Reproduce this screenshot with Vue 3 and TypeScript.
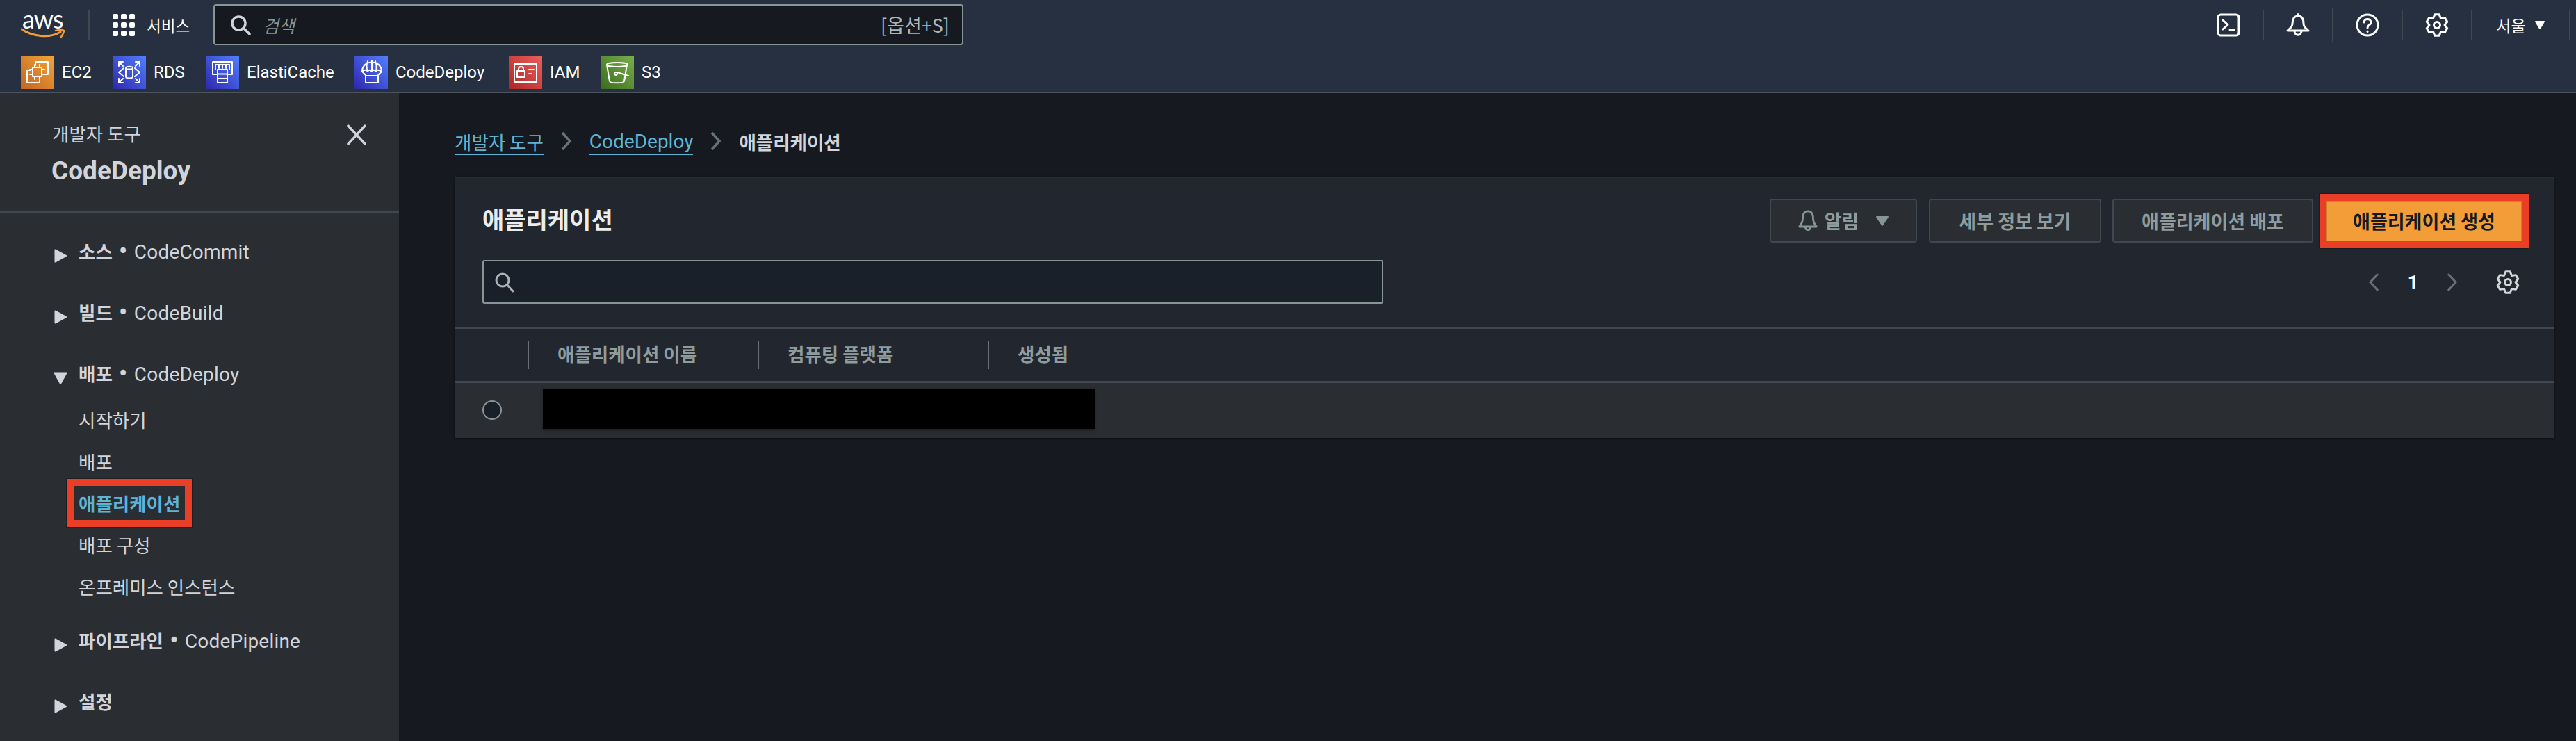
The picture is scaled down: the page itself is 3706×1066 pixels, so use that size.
<script setup lang="ts">
function gear(cx: number, cy: number, ro: number, ri: number, n: number): string {
  const pts: string[] = []
  const step = (Math.PI * 2) / n
  for (let i = 0; i < n; i++) {
    const a = -Math.PI / 2 + i * step
    const seq: [number, number][] = [
      [ri, a - step * 0.5],
      [ro, a - step * 0.2],
      [ro, a + step * 0.2],
    ]
    for (const [r, t] of seq) {
      pts.push(`${(cx + r * Math.cos(t)).toFixed(2)} ${(cy + r * Math.sin(t)).toFixed(2)}`)
    }
  }
  return 'M' + pts.join('L') + 'Z'
}
const gearPath = gear(17, 17, 15.5, 11, 6)

const shortcuts = [
  { name: 'EC2', tone: 'orange', w: 132, d: 'M21 14V9H39V27H33M27 33V39H9V21H14M17 17H30V30H17ZM20 13V17M27 13V17M20 30V34M27 30V34M13 20H17M13 27H17M30 20H34M30 27H34' },
  { name: 'RDS', tone: 'blue', w: 134, d: 'M19 17.5C19 15 29 15 29 17.5V30.500C29 33 19 33 19 30.500ZM19 18C19 20 29 20 29 18M16 18L9 24L16 30M32 18L39 24L32 30M9 15V9H15M9 9L15 15M33 9H39V15M39 9L33 15M9 33V39H15M9 39L15 33M39 33V39H33M39 39L33 33' },
  { name: 'ElastiCache', tone: 'blue', w: 214, d: 'M16 27H10V9H38V27H32M14 20V13H34V20M19 13V18M24 13V18M29 13V18M17 20H31V39H17ZM17 26.500H31M17 33H31' },
  { name: 'CodeDeploy', tone: 'blue', w: 222, d: 'M11 23C11 5 39 5 39 23C35 20 31 20 31 23C29 20 26 20 25 23C23 20 20 20 19 23C18 20 14 20 11 23ZM25 7V23M19 8C17 13 17 18 19 23M30 8C32 13 32 18 31 23M11 23L17 29M39 23L33 29M16 29H34V39H16Z' },
  { name: 'IAM', tone: 'red', w: 132, d: 'M8 12H40V38H8ZM12 22H23V31H12ZM14 22V19C14 15 21 15 21 19V22M29 20H36M29 26H33' },
  { name: 'S3', tone: 'green', w: 100, d: 'M9 13C9 9 39 9 39 13C39 17 9 17 9 13ZM9 13L13 37C14 40 33 40 34 37L38 13M24 24L40 29M22 24A2 2 0 1 0 22.100 24Z' },
]

const subItems = ['시작하기', '배포', '애플리케이션', '배포 구성', '온프레미스 인스턴스']
</script>

<template>
  <div class="page">
    <header class="topbar">
      <div class="toprow">
        <div class="logo">
          <span class="logo-text">aws</span>
          <svg class="swoosh" viewBox="0 0 64 16" width="64" height="16">
            <path d="M1 2C16 12 40 16 57 6" fill="none" stroke="#f29d38" stroke-width="3" stroke-linecap="round" />
            <path d="M50 4C54 3 59 2 62 4C62 7 60 10 58 13" fill="none" stroke="#f29d38" stroke-width="2.500" stroke-linecap="round" />
          </svg>
        </div>
        <div class="services">
          <span class="grid-ico"><i v-for="n in 9" :key="n"></i></span>
          <span class="services-label">서비스</span>
        </div>
        <div class="global-search">
          <svg viewBox="0 0 30 30" width="30" height="30" fill="none" stroke="#d1d5db" stroke-width="3.500">
            <circle cx="12.500" cy="12.500" r="9.500" />
            <path d="M19.500 19.500L28 28" stroke-linecap="round" />
          </svg>
          <span class="gs-placeholder">검색</span>
          <span class="gs-hint">[옵션+S]</span>
        </div>
        <div class="top-actions">
          <div class="act">
            <svg viewBox="0 0 34 34" width="34" height="34" fill="none" stroke="#fff" stroke-width="3" stroke-linecap="round" stroke-linejoin="round">
              <rect x="2" y="2" width="30" height="30" rx="4" />
              <path d="M9 10L16 16.500L9 23M19 24H25" />
            </svg>
          </div>
          <div class="act act-tall">
            <svg viewBox="0 0 34 34" width="34" height="34" fill="none" stroke="#fff" stroke-width="3" stroke-linecap="round" stroke-linejoin="round">
              <path d="M17 1.500V4M17 4C10 4 9 10 9 15C9 20 5 22 2 25H32C29 22 25 20 25 15C25 10 24 4 17 4ZM12 25.500C12 33 22 33 22 25.500" />
            </svg>
          </div>
          <div class="act">
            <svg viewBox="0 0 34 34" width="34" height="34" fill="none" stroke="#fff" stroke-width="3" stroke-linecap="round" stroke-linejoin="round">
              <circle cx="17" cy="17" r="15" />
              <path d="M12 13C12 7 22 7 22 13C22 17 17 16.500 17 21" />
              <path d="M17 26V26.500" />
            </svg>
          </div>
          <div class="act">
            <svg viewBox="0 0 34 34" width="34" height="34" fill="none" stroke="#fff" stroke-width="3" stroke-linejoin="round">
              <path :d="gearPath" />
              <circle cx="17" cy="17" r="4.500" />
            </svg>
          </div>
          <div class="act region">
            <span>서울</span>
            <svg viewBox="0 0 16 14" width="16" height="14"><path d="M2 2H14L8 12Z" fill="#fff" stroke="#fff" stroke-width="2" stroke-linejoin="round" /></svg>
          </div>
        </div>
      </div>
      <div class="shortcuts">
        <div v-for="s in shortcuts" :key="s.name" class="shortcut" :style="{ width: s.w + 'px' }">
          <span class="sc-ico" :class="s.tone">
            <svg viewBox="0 0 48 48" width="48" height="48" fill="none" stroke="#fff" stroke-width="2" stroke-linejoin="round" stroke-linecap="round">
              <path :d="s.d" />
            </svg>
          </span>
          <span>{{ s.name }}</span>
        </div>
      </div>
    </header>

    <div class="body">
      <aside class="sidebar">
        <div class="side-head">
          <div>
            <div class="side-sup ko">개발자 도구</div>
            <div class="side-title">CodeDeploy</div>
          </div>
          <svg class="side-close" viewBox="0 0 28 30" width="28" height="30" fill="none" stroke="#d1d5db" stroke-width="3.500" stroke-linecap="round">
            <path d="M2 2L26 28M26 2L2 28" />
          </svg>
        </div>
        <nav class="side-nav">
          <div class="section">
            <svg class="tri" viewBox="0 0 18 20" width="18" height="20"><path d="M1.500 1.500L17 10L1.500 18.500Z" fill="#d1d5db" stroke="#d1d5db" stroke-width="2" stroke-linejoin="round" /></svg>
            <span><b class="ko">소스</b><i class="dot">•</i>CodeCommit</span>
          </div>
          <div class="section">
            <svg class="tri" viewBox="0 0 18 20" width="18" height="20"><path d="M1.500 1.500L17 10L1.500 18.500Z" fill="#d1d5db" stroke="#d1d5db" stroke-width="2" stroke-linejoin="round" /></svg>
            <span><b class="ko">빌드</b><i class="dot">•</i>CodeBuild</span>
          </div>
          <div class="section open">
            <svg class="tri" viewBox="0 0 20 18" width="20" height="18"><path d="M1.500 1.500H18.500L10 17Z" fill="#d1d5db" stroke="#d1d5db" stroke-width="2" stroke-linejoin="round" /></svg>
            <span><b class="ko">배포</b><i class="dot">•</i>CodeDeploy</span>
          </div>
          <ul class="subs">
            <li v-for="item in subItems" :key="item">
              <span class="ko sub-label" :class="{ active: item === '애플리케이션' }">{{ item }}</span>
            </li>
          </ul>
          <div class="section">
            <svg class="tri" viewBox="0 0 18 20" width="18" height="20"><path d="M1.500 1.500L17 10L1.500 18.500Z" fill="#d1d5db" stroke="#d1d5db" stroke-width="2" stroke-linejoin="round" /></svg>
            <span><b class="ko">파이프라인</b><i class="dot">•</i>CodePipeline</span>
          </div>
          <div class="section">
            <svg class="tri" viewBox="0 0 18 20" width="18" height="20"><path d="M1.500 1.500L17 10L1.500 18.500Z" fill="#d1d5db" stroke="#d1d5db" stroke-width="2" stroke-linejoin="round" /></svg>
            <span><b class="ko">설정</b></span>
          </div>
        </nav>
      </aside>

      <main class="main">
        <div class="crumbs">
          <a class="crumb ko">개발자 도구</a>
          <svg viewBox="0 0 16 28" width="16" height="28" fill="none" stroke="#687078" stroke-width="3.500"><path d="M2 2L13 14L2 26" /></svg>
          <a class="crumb">CodeDeploy</a>
          <svg viewBox="0 0 16 28" width="16" height="28" fill="none" stroke="#687078" stroke-width="3.500"><path d="M2 2L13 14L2 26" /></svg>
          <span class="crumb-cur ko">애플리케이션</span>
        </div>

        <section class="panel">
          <div class="panel-head">
            <div class="head-row">
              <h1 class="title ko">애플리케이션</h1>
              <div class="btns">
                <button class="btn w-alert">
                  <svg viewBox="0 0 30 34" width="30" height="32" fill="none" stroke="#879596" stroke-width="3" stroke-linejoin="round" stroke-linecap="round">
                    <path d="M15 2C8 2 7 8 7 14C7 20 4 22 2 25.500H28C26 22 23 20 23 14C23 8 22 2 15 2ZM11 26C11 32 19 32 19 26" />
                  </svg>
                  <span>알림</span>
                  <svg class="btn-caret" viewBox="0 0 20 16" width="20" height="16"><path d="M2 2H18L10 14Z" fill="#879596" stroke="#879596" stroke-width="2" stroke-linejoin="round" /></svg>
                </button>
                <button class="btn w-detail">세부 정보 보기</button>
                <button class="btn w-deploy">애플리케이션 배포</button>
                <button class="btn-primary">애플리케이션 생성</button>
              </div>
            </div>
            <div class="tool-row">
              <div class="search">
                <svg viewBox="0 0 30 30" width="30" height="30" fill="none" stroke="#a9b3b5" stroke-width="3">
                  <circle cx="12" cy="12" r="9" />
                  <path d="M18.500 18.500L27 28" stroke-linecap="round" />
                </svg>
              </div>
              <div class="pager">
                <svg viewBox="0 0 16 28" width="16" height="28" fill="none" stroke="#687078" stroke-width="3"><path d="M14 2L3 14L14 26" /></svg>
                <span class="page-num">1</span>
                <svg viewBox="0 0 16 28" width="16" height="28" fill="none" stroke="#687078" stroke-width="3"><path d="M2 2L13 14L2 26" /></svg>
                <span class="pager-div"></span>
                <svg class="pager-gear" viewBox="0 0 34 34" width="34" height="34" fill="none" stroke="#d1d5db" stroke-width="3" stroke-linejoin="round">
                  <path :d="gearPath" />
                  <circle cx="17" cy="17" r="4.500" />
                </svg>
              </div>
            </div>
          </div>
          <div class="thead">
            <div class="th-sel"></div>
            <div class="th ko">애플리케이션 이름</div>
            <div class="th ko">컴퓨팅 플랫폼</div>
            <div class="th ko">생성됨</div>
          </div>
          <div class="trow">
            <span class="radio"></span>
            <div class="redacted"></div>
          </div>
        </section>
      </main>
    </div>
  </div>
</template>

<style scoped>
.page {
  display: flex;
  flex-direction: column;
  height: 1066px;
  overflow: hidden;
  background: #16191f;
  color: #d1d5db;
  font-family: Roboto, "Noto Sans CJK KR", sans-serif;
  font-size: 28px;
}
.ko {
  font-family: "Noto Sans CJK KR", sans-serif;
  font-size: 26.5px;
}
.topbar {
  flex: none;
  height: 134px;
  box-sizing: border-box;
  background: #263040;
  border-bottom: 2px solid #4d535b;
  color: #fff;
}
.toprow {
  display: flex;
  align-items: center;
  height: 71px;
}
.logo {
  width: 97px;
  height: 44px;
  margin-left: 30px;
  display: flex;
  flex-direction: column;
  border-right: 2px solid #414750;
}
.logo-text {
  font-family: Lato, sans-serif;
  font-size: 36px;
  line-height: 26px;
  height: 26px;
  margin-left: 2px;
  letter-spacing: -1px;
}
.swoosh {
  display: block;
}
.services {
  display: flex;
  align-items: center;
  width: 145px;
  margin-left: 33px;
  gap: 17px;
}
.grid-ico {
  display: grid;
  grid-template-columns: repeat(3, 8px);
  grid-auto-rows: 8px;
  gap: 4px;
}
.grid-ico i {
  background: #fff;
  border-radius: 2px;
}
.services-label {
  font-family: "Noto Sans CJK KR", sans-serif;
  font-size: 22.5px;
}
.global-search {
  display: flex;
  align-items: center;
  box-sizing: border-box;
  width: 1079px;
  height: 59px;
  padding: 0 18px 0 22px;
  background: #16191f;
  border: 2px solid #879596;
  border-radius: 4px;
}
.gs-placeholder {
  margin-left: 17px;
  font-family: "Noto Sans CJK KR", sans-serif;
  font-size: 25px;
  font-style: italic;
  color: #879596;
}
.gs-hint {
  margin-left: auto;
  font-family: "Noto Sans CJK KR", sans-serif;
  font-size: 27px;
  color: #aab7b8;
}
.top-actions {
  display: flex;
  align-items: center;
  margin-left: auto;
  margin-right: 8px;
}
.act {
  display: flex;
  align-items: center;
  justify-content: center;
  box-sizing: border-box;
  width: 100px;
  height: 44px;
  border-right: 2px solid #414750;
}
.act-tall {
  height: 48px;
}
.region {
  width: 141px;
  gap: 12px;
  font-family: "Noto Sans CJK KR", sans-serif;
  font-size: 23px;
}
.shortcuts {
  display: flex;
  padding: 9px 0 0 30px;
  font-size: 24px;
}
.shortcut {
  display: flex;
  align-items: center;
  gap: 11px;
}
.sc-ico {
  display: block;
  width: 48px;
  height: 48px;
}
.sc-ico svg {
  display: block;
}
.orange {
  background: linear-gradient(45deg, #c8631f, #f0a53a);
}
.blue {
  background: linear-gradient(45deg, #2e27ad, #527fff);
}
.red {
  background: linear-gradient(45deg, #ad2625, #ec5f5a);
}
.green {
  background: linear-gradient(45deg, #3b6c1e, #7aae4c);
}
.body {
  flex: 1;
  display: flex;
  min-height: 0;
}
.sidebar {
  flex: none;
  width: 574px;
  background: #2a2e33;
}
.side-head {
  display: flex;
  justify-content: space-between;
  box-sizing: border-box;
  height: 172px;
  padding: 38px 47px 0 74px;
  border-bottom: 2px solid #414750;
}
.side-sup {
  margin-left: 1px;
  line-height: 40px;
}
.side-title {
  margin-top: 11px;
  font-size: 37px;
  font-weight: 700;
  line-height: 46px;
}
.side-close {
  margin-top: 7px;
}
.side-nav {
  padding: 26px 0 0 77px;
}
.section {
  display: flex;
  align-items: center;
  height: 60px;
  margin-bottom: 28px;
  line-height: 60px;
  letter-spacing: 0.2px;
}
.section.open {
  margin-bottom: 7px;
}
.section b {
  font-weight: 700;
  letter-spacing: 0;
}
.dot {
  margin: 0 9px;
  font-family: Roboto, sans-serif;
  font-size: 38px;
  font-style: normal;
  line-height: 0;
  vertical-align: -2px;
}
.tri {
  flex: none;
  width: 20px;
  margin-top: 12px;
  margin-right: 16px;
}
.subs {
  list-style: none;
  margin: 0 0 17px;
  padding: 0 0 0 36px;
}
.subs li {
  display: flex;
  align-items: center;
  box-sizing: border-box;
  height: 60px;
  padding-bottom: 3px;
}
.sub-label {
  line-height: 49px;
}
.sub-label.active {
  display: block;
  margin-left: -7px;
  padding: 0 7px;
  font-weight: 700;
  color: #5db5d5;
  outline: 10px solid #ea3f26;
  box-shadow: 0 0 0 11px rgba(0, 0, 0, 0.3);
}
.main {
  flex: 1;
  min-width: 0;
  padding: 0 32px 0 80px;
}
.crumbs {
  display: flex;
  align-items: center;
  box-sizing: border-box;
  height: 120px;
  padding: 20px 0 2px;
  gap: 25px;
}
.crumb {
  color: #5db5d5;
  line-height: 34px;
  border-bottom: 2px solid #5db5d5;
  margin-top: 4px;
}
.crumb-cur {
  font-weight: 700;
  color: #d1d5db;
}
.panel {
  background: #22262e;
  border-top: 2px solid #2a2e33;
  box-shadow: 0 1px 3px rgba(0, 0, 0, 0.5);
}
.panel-head {
  padding: 30px 46px 0 40px;
}
.head-row {
  display: flex;
  align-items: center;
  justify-content: space-between;
  height: 63px;
}
.title {
  margin: 0;
  padding-bottom: 6px;
  font-size: 34px;
  font-weight: 700;
  line-height: 57px;
  color: #eaeded;
}
.btns {
  display: flex;
  align-items: center;
}
.btn {
  display: flex;
  align-items: center;
  justify-content: center;
  box-sizing: border-box;
  height: 63px;
  padding: 0;
  background: #2a2e33;
  border: 2px solid #414750;
  border-radius: 4px;
  color: #8f9c9d;
  font-family: "Noto Sans CJK KR", sans-serif;
  font-size: 27px;
  font-weight: 700;
}
.w-alert {
  width: 212px;
  margin-right: 17px;
  gap: 9px;
}
.btn-caret {
  margin-left: 15px;
}
.w-detail {
  width: 248px;
  margin-right: 16px;
}
.w-deploy {
  width: 289px;
  margin-right: 19px;
}
.btn-primary {
  box-sizing: border-box;
  width: 281px;
  height: 58px;
  padding: 0;
  background: #f29d38;
  border: 1px solid #c98330;
  color: #16191f;
  font-family: "Noto Sans CJK KR", sans-serif;
  font-size: 27px;
  font-weight: 700;
  outline: 10px solid #ea3f26;
  box-shadow: 0 0 0 11px rgba(0, 0, 0, 0.25);
}
.tool-row {
  display: flex;
  align-items: flex-start;
  justify-content: space-between;
  margin-top: 25px;
  height: 97px;
}
.search {
  display: flex;
  align-items: center;
  box-sizing: border-box;
  width: 1296px;
  height: 63px;
  padding-left: 15px;
  background: #1a2029;
  border: 2px solid #879596;
  border-radius: 3px;
}
.pager {
  display: flex;
  align-items: center;
  height: 64px;
}
.page-num {
  width: 41px;
  margin: 0 28px;
  text-align: center;
  color: #fff;
  font-weight: 700;
  font-size: 28px;
}
.pager-div {
  width: 1px;
  height: 64px;
  margin: 0 24px 0 30px;
  background: #687078;
}
.pager-gear {
  margin-right: 3px;
}
.thead {
  display: grid;
  grid-template-columns: 106px 331px 331px 1fr;
  align-items: center;
  box-sizing: border-box;
  height: 80px;
  border-top: 2px solid #414750;
  border-bottom: 3px solid #414750;
}
.th {
  display: flex;
  align-items: center;
  box-sizing: border-box;
  height: 40px;
  padding: 0 0 5px 41px;
  border-left: 1px solid #687078;
  font-weight: 700;
  color: #8f9c9d;
}
.trow {
  display: flex;
  align-items: center;
  box-sizing: border-box;
  height: 79px;
  padding: 0 0 5px 40px;
  background: #2a2e33;
}
.radio {
  flex: none;
  box-sizing: border-box;
  width: 28px;
  height: 28px;
  margin-top: 4px;
  background: #1a2029;
  border: 2px solid #879596;
  border-radius: 50%;
}
.redacted {
  width: 794px;
  height: 58px;
  margin-left: 59px;
  background: #000;
  box-shadow: 0 2px 4px rgba(0, 0, 0, 0.4);
}
</style>

<style>
html,
body {
  margin: 0;
  background: #16191f;
}
</style>
